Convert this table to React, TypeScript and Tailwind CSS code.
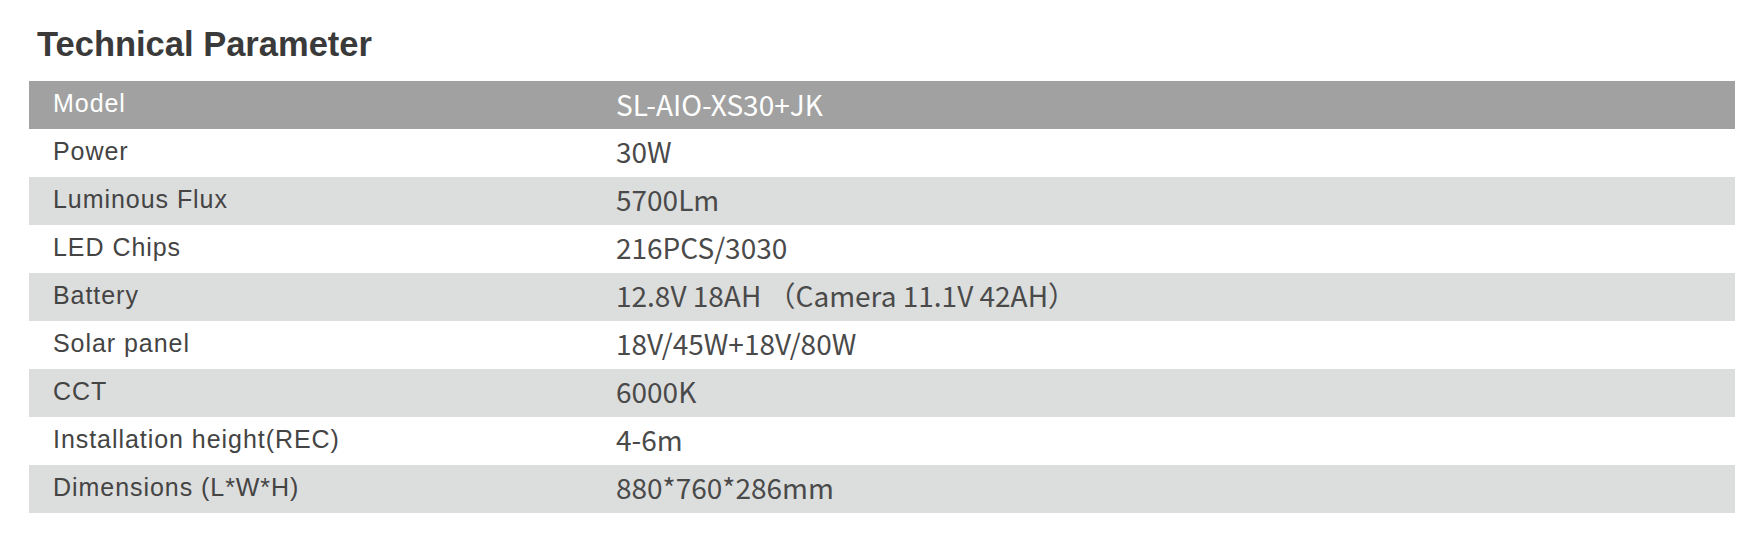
import React from "react";

const rows: [string, string][] = [
  ["Power", "30W"],
  ["Luminous Flux", "5700Lm"],
  ["LED Chips", "216PCS/3030"],
  ["Battery", "12.8V 18AH （Camera 11.1V 42AH）"],
  ["Solar panel", "18V/45W+18V/80W"],
  ["CCT", "6000K"],
  ["Installation height(REC)", "4-6m"],
  ["Dimensions (L*W*H)", "880*760*286mm"],
];

const labelFont = "font-['Liberation_Sans',Arial,sans-serif]";
const valueFont = "font-['Noto_Sans_CJK_SC','Noto_Sans',sans-serif]";

export default function App() {
  return (
    <div className="w-[1764px] h-[542px] bg-white pt-[27px] pl-[29px]">
      <h1 className="font-['Liberation_Sans',Arial,sans-serif] font-bold text-[34.5px] leading-[34px] text-[#3a3a3a] pl-[8px] mb-[20px]">
        Technical Parameter
      </h1>
      <div className="w-[1706px] flex flex-col">
        <div className="flex h-[48px] bg-[#a0a1a0] text-white">
          <div className={`w-[587px] pl-6 pb-[2px] flex items-center text-[25px] tracking-[0.95px] ${labelFont}`}>
            Model
          </div>
          <div className={`flex items-center pb-[2px] text-[28px] ${valueFont}`}>SL-AIO-XS30+JK</div>
        </div>
        {rows.map(([k, v], i) => (
          <div
            key={k}
            className={`flex h-[48px] ${i % 2 === 1 ? "bg-[#dcdddd]" : "bg-white"}`}
          >
            <div className={`w-[587px] pl-6 pb-[2px] flex items-center text-[25px] tracking-[0.95px] text-[#444444] ${labelFont}`}>
              {k}
            </div>
            <div className={`flex items-center pb-[4px] text-[28px] text-[#4a4a4a] whitespace-pre ${valueFont}`}>{v}</div>
          </div>
        ))}
      </div>
    </div>
  );
}
